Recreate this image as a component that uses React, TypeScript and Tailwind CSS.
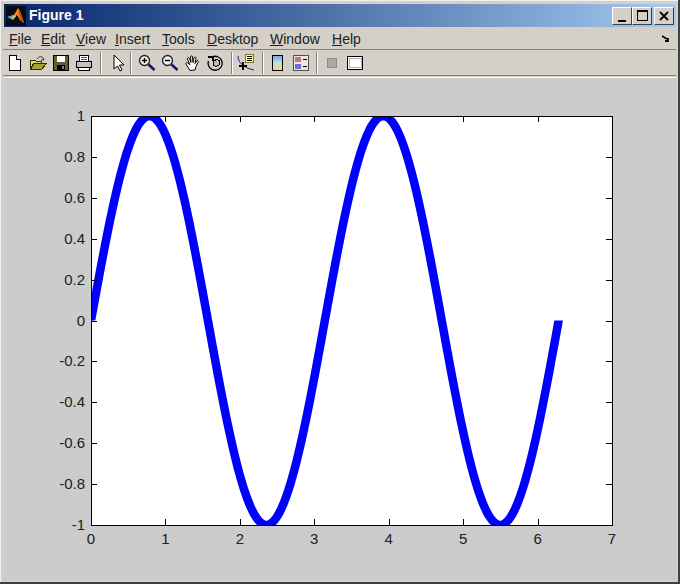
import type { ReactNode } from 'react';

const menus = [
  { label: 'File', width: 'w-[32px]' },
  { label: 'Edit', width: 'w-[35px]' },
  { label: 'View', width: 'w-[39px]' },
  { label: 'Insert', width: 'w-[47px]' },
  { label: 'Tools', width: 'w-[45px]' },
  { label: 'Desktop', width: 'w-[63px]' },
  { label: 'Window', width: 'w-[62px]' },
  { label: 'Help', width: 'w-[32px]' },
];
const xTicks = [0, 1, 2, 3, 4, 5, 6, 7];
const yTicks = ['1', '0.8', '0.6', '0.4', '0.2', '0', '-0.2', '-0.4', '-0.6', '-0.8', '-1'];

const X0 = 91;
const X1 = 612;
const Y0 = 116;
const Y1 = 525;
const FIG_TOP = 78;
const FIG_LEFT = 4;

const px = (x: number) => X0 - FIG_LEFT + (x / 7) * (X1 - X0);
const py = (y: number) => Y0 - FIG_TOP + ((1 - y) / 2) * (Y1 - Y0);

function sinePath() {
  const pts: string[] = [];
  // runs a little past both ends, the clip cuts them off flat
  for (let i = -6; i <= 306; i++) {
    const t = (i / 300) * 2 * Math.PI;
    pts.push(`${px(t).toFixed(2)},${py(Math.sin(2 * t)).toFixed(2)}`);
  }
  return 'M' + pts.join(' L');
}

function clipOutline() {
  const l = px(0);
  const r = px(7);
  const t = py(1);
  const b = py(-1);
  const mid = py(0);
  return `M${l} ${t}H${px(6)}V${mid}H${r}V${b}H${px(0.4)}V${mid}H${l}Z`;
}

function Tool({ children }: { children: ReactNode }) {
  return <div className="w-[23px] h-[22px] flex items-center justify-center shrink-0">{children}</div>;
}

function Sep({ className }: { className: string }) {
  return <div className={`w-[2px] h-[22px] bg-[#808080] border-r border-white shrink-0 ${className}`} />;
}

function Icon({ children }: { children: ReactNode }) {
  return (
    <svg width="18" height="18" viewBox="0 0 18 18" shapeRendering="crispEdges">
      {children}
    </svg>
  );
}

function Magnifier({ plus }: { plus: boolean }) {
  return (
    <Icon>
      <circle cx="6.5" cy="6.5" r="5" fill="#e8f0f0" stroke="#202020" strokeWidth="1.3" shapeRendering="auto" />
      <path d="M4 6.5h5" stroke="#000" strokeWidth="1.4" shapeRendering="auto" />
      {plus && <path d="M6.5 4v5" stroke="#000" strokeWidth="1.4" shapeRendering="auto" />}
      <path d="M10.5 10.5l6 5.5" stroke="#10106a" strokeWidth="2.4" shapeRendering="auto" />
    </Icon>
  );
}

export default function App() {
  return (
    <div className="w-[680px] h-[584px] bg-[#d4d0c8] border-b-2 border-r-2 border-[#404040] overflow-hidden font-['Liberation_Sans',sans-serif]">
      <div className="border-t border-l border-t-[#f4f2ee] border-l-[#f4f2ee] pl-[3px] pt-[3px] pr-[2px] pb-[2px] h-full flex flex-col">
        {/* Title bar */}
        <div className="h-[23px] shrink-0 flex items-center bg-gradient-to-r from-[#0a246a] to-[#a6caf0]">
          <svg width="20" height="20" viewBox="0 0 20 20" className="ml-[2px] shrink-0">
            <rect width="20" height="20" fill="#0c0c14" />
            <path d="M8 9l4-7 2 3 4 12-4-3-3-5-3 3z" fill="#f08a24" />
            <path d="M12 2l2 3 4 12-4-3z" fill="#c04f10" />
            <path d="M1 11l6-2 3 1-3 4z" fill="#4fa8c4" />
            <path d="M7 9l3 1-3 4-1-3z" fill="#d8c070" />
          </svg>
          <span className="ml-[3px] text-[14px] font-bold text-white">Figure 1</span>
          <div className="ml-auto flex mr-[2px]">
            <div className="w-[20px] h-[18px] bg-[#d4d0c8] border border-t-white border-l-white border-r-[#404040] border-b-[#404040] flex items-end justify-center pb-[2px]">
              <div className="w-[8px] h-[2px] bg-black" />
            </div>
            <div className="w-[20px] h-[18px] bg-[#d4d0c8] border border-t-white border-l-white border-r-[#404040] border-b-[#404040] flex items-center justify-center">
              <div className="w-[11px] h-[11px] border border-t-2 border-black" />
            </div>
            <div className="w-[20px] h-[18px] ml-[2px] bg-[#d4d0c8] border border-t-white border-l-white border-r-[#404040] border-b-[#404040] flex items-center justify-center">
              <svg width="10" height="10" viewBox="0 0 10 10">
                <path d="M1 1l8 8M9 1l-8 8" stroke="#000" strokeWidth="1.8" />
              </svg>
            </div>
          </div>
        </div>

        {/* Menu bar */}
        <div className="h-[22px] shrink-0 flex items-center pl-[5px] pt-[2px] text-[14px] text-[#202020] relative">
          {menus.map((m) => (
            <span key={m.label} className={`${m.width} shrink-0`}>
              <u>{m.label[0]}</u>
              {m.label.slice(1)}
            </span>
          ))}
          <svg width="8" height="8" viewBox="0 0 8 8" className="absolute right-[6px] top-[8px]">
            <path d="M0 1l5 3M3 6h3V3" stroke="#000" strokeWidth="1.8" fill="none" />
          </svg>
        </div>

        {/* Toolbar */}
        <div className="h-[27px] shrink-0 border-t border-b border-t-[#808080] border-b-[#808080] flex items-center -ml-[1px]">
          <Tool>
            <Icon>
              <path d="M3.5 1.5h7l4 4v11h-11z" fill="#fff" stroke="#000" />
              <path d="M10.5 1.5v4h4" fill="#e0e0e0" stroke="#000" />
            </Icon>
          </Tool>
          <Tool>
            <Icon>
              <path d="M1.5 6.5h5l1 1h5v8h-11z" fill="#e8d870" stroke="#303000" />
              <path d="M1.5 15.5l3-6h13l-5 6z" fill="#a8a030" stroke="#303000" />
              <path d="M8 5c2-3 5-3 6-1l1 2h-3" fill="none" stroke="#303030" shapeRendering="auto" />
            </Icon>
          </Tool>
          <Tool>
            <Icon>
              <rect x="1.5" y="1.5" width="15" height="15" fill="#606030" stroke="#000" />
              <rect x="5" y="2" width="8" height="6" fill="#fff" />
              <rect x="5" y="11" width="8" height="5" fill="#000" />
              <rect x="10" y="12" width="2" height="3" fill="#808080" />
            </Icon>
          </Tool>
          <Tool>
            <Icon>
              <path d="M4.5 1.5h9v6h-9z" fill="#fff" stroke="#000" />
              <path d="M1.5 7.5h15v6h-15z" fill="#c0c0c0" stroke="#000" />
              <path d="M3.5 13.5h11v3h-11z" fill="#fff" stroke="#000" />
              <path d="M6 3.5h6M6 5.5h6" stroke="#505050" />
            </Icon>
          </Tool>
          <Sep className="ml-[5px] mr-[4px]" />
          <Tool>
            <Icon>
              <path d="M5 1v14l3.5-3 2.5 5 2-1-2.500-5h4.500z" fill="#fff" stroke="#000" shapeRendering="auto" />
            </Icon>
          </Tool>
          <Sep className="ml-[1px] mr-[3px]" />
          <Tool><Magnifier plus /></Tool>
          <Tool><Magnifier plus={false} /></Tool>
          <Tool>
            <Icon>
              <path d="M6 16.500l-4-6.500c-.5-1 1-2 2-1l2 2-2.500-6c-.5-1.500 1.500-2 2-.5l1.500 4-.5-5.500c0-1.500 2-1.500 2 0l.5 5.500 1-4.500c.5-1.500 2.500-1 2 .5l-1 5 1.500-2.500c1-1 2.500 0 1.500 1.500l-2 4-1 3.500z" fill="#fff" stroke="#000" shapeRendering="auto" />
            </Icon>
          </Tool>
          <Tool>
            <Icon>
              <path d="M5 3a7 7 0 1 1-3.500 4" fill="none" stroke="#000" strokeWidth="1.3" shapeRendering="auto" />
              <path d="M1 3h5v4" fill="none" stroke="#000" strokeWidth="1.2" />
              <path d="M6.500 7l3-1.500 2.500 1v4.500l-3 1.500-2.500-1z" fill="#b8b8b8" stroke="#000" />
            </Icon>
          </Tool>
          <Sep className="ml-[4px] mr-[1px]" />
          <Tool>
            <Icon>
              <path d="M8.500 .5h8v8h-8z" fill="#ffff90" stroke="#807020" />
              <path d="M10 2.500h5M10 4.500h5M10 6.500h5" stroke="#000" />
              <path d="M1 2c0 6 5 12 16 14" fill="none" stroke="#2020a0" shapeRendering="auto" />
              <path d="M2 12h8M6 8v8" stroke="#000" strokeWidth="2" />
            </Icon>
          </Tool>
          <Sep className="ml-[5px] mr-[2px]" />
          <Tool>
            <svg width="18" height="18" viewBox="0 0 18 18" shapeRendering="crispEdges">
              <defs>
                <linearGradient id="cb" x1="0" y1="0" x2="0" y2="1">
                  <stop offset="0" stopColor="#70a8f0" />
                  <stop offset="0.5" stopColor="#b8e8d0" />
                  <stop offset="1" stopColor="#f8d080" />
                </linearGradient>
              </defs>
              <rect x="3.500" y="1.500" width="10" height="15" fill="url(#cb)" stroke="#000" />
            </svg>
          </Tool>
          <Tool>
            <Icon>
              <rect x="1.500" y="1.500" width="15" height="15" fill="#e8e8e0" stroke="#505050" />
              <rect x="3" y="3" width="6" height="5" fill="#d07070" />
              <rect x="3" y="10" width="6" height="5" fill="#7070d0" />
              <path d="M11 5h4M11 12h4" stroke="#000" />
            </Icon>
          </Tool>
          <Sep className="ml-[4px] mr-[2px]" />
          <Tool>
            <Icon>
              <rect x="4.500" y="4.500" width="9" height="9" fill="#a8a8a8" stroke="#8c8c8c" />
            </Icon>
          </Tool>
          <Tool>
            <Icon>
              <rect x="1.500" y="2.500" width="15" height="13" fill="#fff" stroke="#000" />
              <path d="M3 4.500h12v9H3z" fill="none" stroke="#b0b0b0" />
            </Icon>
          </Tool>
        </div>

        {/* Figure area */}
        <div className="flex-1 mt-[1px] border-t border-t-white bg-[#cccccc]">
          <svg width="672" height="502" className="block font-['Liberation_Sans',sans-serif]">
            <defs>
              <clipPath id="axes">
                <path d={clipOutline()} />
              </clipPath>
            </defs>
            <rect x={X0 - FIG_LEFT} y={Y0 - FIG_TOP} width={X1 - X0} height={Y1 - Y0} fill="#fff" />
            <path d={sinePath()} fill="none" stroke="#0000ff" strokeWidth="8.5" clipPath="url(#axes)" />
            <rect x={X0 - FIG_LEFT + 0.5} y={Y0 - FIG_TOP + 0.5} width={X1 - X0} height={Y1 - Y0} fill="none" stroke="#000" />
            {xTicks.map((t) => (
              <g key={t}>
                <path d={`M${Math.round(px(t)) + 0.5} ${py(-1)}v-6M${Math.round(px(t)) + 0.5} ${py(1)}v6`} stroke="#000" />
                <text x={px(t)} y={py(-1) + 19} textAnchor="middle" fontSize="15" fill="#202020">{t}</text>
              </g>
            ))}
            {yTicks.map((t, i) => {
              const v = 1 - i * 0.2;
              return (
                <g key={t}>
                  <path d={`M${px(0)} ${Math.round(py(v)) + 0.5}h6M${px(7)} ${Math.round(py(v)) + 0.5}h-6`} stroke="#000" />
                  <text x={px(0) - 6} y={py(v) + 5} textAnchor="end" fontSize="15" fill="#202020">{t}</text>
                </g>
              );
            })}
          </svg>
        </div>
      </div>
    </div>
  );
}
